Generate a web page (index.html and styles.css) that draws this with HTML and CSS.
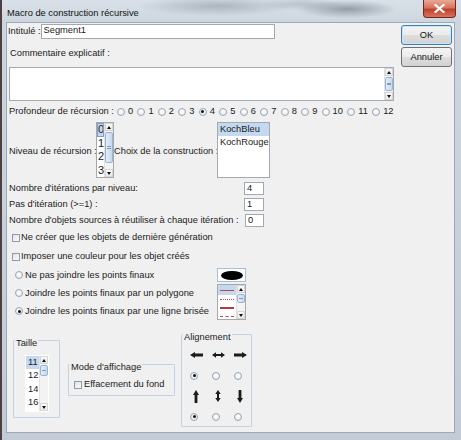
FILE: index.html
```html
<!DOCTYPE html>
<html lang="fr">
<head>
<meta charset="utf-8">
<title>Macro de construction récursive</title>
<link rel="stylesheet" href="styles.css">
</head>
<body>
<div class="frame">
  <div class="titlebar">
    <span class="title">Macro de construction récursive</span>
    <div class="close">
      <svg width="11" height="9" viewBox="0 0 11 9"><path d="M1.5 1 L9.5 8 M9.5 1 L1.5 8" stroke="#fff" stroke-width="2.2" stroke-linecap="square"/></svg>
    </div>
  </div>
  <div class="client">
    <div class="main">
      <div class="row r-intitule">
        <span>Intitulé :</span>
        <div class="field f-name">Segment1</div>
      </div>
      <div class="row r-comment">Commentaire explicatif :</div>
      <div class="textarea">
        <div class="ta-body"></div>
        <div class="vscroll">
          <div class="sb-btn up"></div>
          <div class="sb-track"><div class="sb-thumb t-ta"></div></div>
          <div class="sb-btn down"></div>
        </div>
      </div>
      <div class="row r-prof">
        <span class="lbl">Profondeur de récursion :</span>
        <span class="opt"><i class="radio"></i>0</span>
        <span class="opt"><i class="radio"></i>1</span>
        <span class="opt"><i class="radio"></i>2</span>
        <span class="opt"><i class="radio"></i>3</span>
        <span class="opt"><i class="radio on"></i>4</span>
        <span class="opt"><i class="radio"></i>5</span>
        <span class="opt"><i class="radio"></i>6</span>
        <span class="opt"><i class="radio"></i>7</span>
        <span class="opt"><i class="radio"></i>8</span>
        <span class="opt"><i class="radio"></i>9</span>
        <span class="opt"><i class="radio"></i>10</span>
        <span class="opt"><i class="radio"></i>11</span>
        <span class="opt"><i class="radio"></i>12</span>
      </div>
      <div class="row r-niveau">
        <span class="niv-lbl w-niv">Niveau de récursion :</span>
        <div class="list l-niveau">
          <div class="items">
            <div class="item sel focus">0</div>
            <div class="item">1</div>
            <div class="item">2</div>
            <div class="item">3</div>
          </div>
          <div class="vscroll">
            <div class="sb-btn up"></div>
            <div class="sb-track"><div class="sb-thumb t-niv"></div></div>
            <div class="sb-btn down"></div>
          </div>
        </div>
        <span class="niv-lbl w-choix">Choix de la construction :</span>
        <div class="list l-choix">
          <div class="items">
            <div class="item sel">KochBleu</div>
            <div class="item">KochRouge</div>
          </div>
        </div>
      </div>
      <div class="nums">
        <div class="num-row"><span>Nombre d'itérations par niveau:</span><div class="field f-num">4</div></div>
        <div class="num-row"><span>Pas d'itération (&gt;=1) :</span><div class="field f-num">1</div></div>
        <div class="num-row"><span>Nombre d'objets sources à réutiliser à chaque itération :</span><div class="field f-num f-last">0</div></div>
      </div>
      <div class="row r-check"><i class="check"></i>Ne créer que les objets de dernière génération</div>
      <div class="row r-check"><i class="check"></i>Imposer une couleur pour les objet créés</div>
      <div class="join">
        <div class="join-opts">
          <div class="row r-radio"><i class="radio"></i>Ne pas joindre les points finaux</div>
          <div class="row r-radio"><i class="radio"></i>Joindre les points finaux par un polygone</div>
          <div class="row r-radio"><i class="radio on"></i>Joindre les points finaux par une ligne brisée</div>
        </div>
        <div class="join-side">
          <div class="oval-box"><div class="oval"></div></div>
          <div class="list l-lines">
            <div class="items">
              <div class="line-item sel"><div class="ln solid"></div></div>
              <div class="line-item"><div class="ln dotted"></div></div>
              <div class="line-item"><div class="ln thick"></div></div>
              <div class="line-item"><div class="ln dashed"></div></div>
            </div>
            <div class="vscroll">
              <div class="sb-btn up"></div>
              <div class="sb-track"><div class="sb-thumb t-lines"></div></div>
              <div class="sb-btn down"></div>
            </div>
          </div>
        </div>
      </div>
      <div class="bottom">
        <div class="group g-taille">
          <span class="gtitle">Taille</span>
          <div class="list l-taille">
            <div class="items">
              <div class="item sel">11</div>
              <div class="item">12</div>
              <div class="item">14</div>
              <div class="item">16</div>
            </div>
            <div class="vscroll">
              <div class="sb-btn up"></div>
              <div class="sb-track"><div class="sb-thumb t-taille"></div></div>
              <div class="sb-btn down"></div>
            </div>
          </div>
        </div>
        <div class="group g-mode">
          <span class="gtitle">Mode d'affichage</span>
          <div class="row r-mode"><i class="check"></i>Effacement du fond</div>
        </div>
        <div class="group g-align">
          <span class="gtitle">Alignement</span>
          <div class="agrid">
            <div class="cell"><svg width="13" height="6" viewBox="0 0 13 6"><path d="M0 3 L5 0 L5 1.6 L13 1.6 L13 4.4 L5 4.4 L5 6 Z" fill="#1c1c1c"/></svg></div>
            <div class="cell"><svg width="13" height="6" viewBox="0 0 13 6"><path d="M0 3 L4 0.3 L4 2 L9 2 L9 0.3 L13 3 L9 5.7 L9 4 L4 4 L4 5.7 Z" fill="#1c1c1c"/></svg></div>
            <div class="cell"><svg width="13" height="6" viewBox="0 0 13 6"><path d="M13 3 L8 0 L8 1.6 L0 1.6 L0 4.4 L8 4.4 L8 6 Z" fill="#1c1c1c"/></svg></div>
            <div class="cell"><i class="radio on"></i></div>
            <div class="cell"><i class="radio"></i></div>
            <div class="cell"><i class="radio"></i></div>
            <div class="cell"><svg width="6" height="13" viewBox="0 0 6 13"><path d="M3 0 L6 5 L4.4 5 L4.4 13 L1.6 13 L1.6 5 L0 5 Z" fill="#1c1c1c"/></svg></div>
            <div class="cell"><svg width="6" height="12" viewBox="0 0 6 12"><path d="M3 0 L5.7 4 L4 4 L4 8 L5.7 8 L3 12 L0.3 8 L2 8 L2 4 L0.3 4 Z" fill="#1c1c1c"/></svg></div>
            <div class="cell"><svg width="6" height="13" viewBox="0 0 6 13"><path d="M3 13 L6 8 L4.4 8 L4.4 0 L1.6 0 L1.6 8 L0 8 Z" fill="#1c1c1c"/></svg></div>
            <div class="cell"><i class="radio on"></i></div>
            <div class="cell"><i class="radio"></i></div>
            <div class="cell"><i class="radio"></i></div>
          </div>
        </div>
      </div>
    </div>
    <div class="buttons">
      <div class="btn default">OK</div>
      <div class="btn">Annuler</div>
    </div>
  </div>
</div>
</body>
</html>
```
FILE: styles.css
```css
* { box-sizing: border-box; }
html, body { margin: 0; padding: 0; }
body {
  width: 461px;
  height: 440px;
  overflow: hidden;
  font-family: "Liberation Sans", Arial, sans-serif;
  font-size: 9.3px;
  line-height: 11px;
  color: #1b1b1b;
  background: #c8d1db;
}
.frame {
  width: 461px;
  height: 440px;
  display: flex;
  flex-direction: column;
  border-left: 2px solid #4d3f42;
  background:
    radial-gradient(ellipse 80px 10px at 215px 6px, rgba(95,105,115,0.35), transparent),
    radial-gradient(ellipse 50px 9px at 345px 9px, rgba(70,78,88,0.45), transparent),
    radial-gradient(ellipse 40px 7px at 300px 4px, rgba(120,128,138,0.3), transparent),
    linear-gradient(to bottom, #d9e0e8 0px, #cdd6df 22px, #c3ccd6 100%);
}
.titlebar {
  height: 22px;
  display: flex;
  align-items: flex-start;
  padding-left: 5px;
}
.title {
  margin-top: 8px;
  line-height: 11px;
  color: #111;
}
.close {
  margin-left: auto;
  margin-right: 5px;
  width: 33px;
  height: 18px;
  border: 1px solid #6f2a20;
  border-top: 0;
  border-radius: 0 0 4px 4px;
  background: linear-gradient(to bottom, #e9a897 0%, #d6755f 45%, #c2402a 55%, #d8735b 100%);
  display: flex;
  align-items: center;
  justify-content: center;
}
.client {
  margin-left: 4px;
  width: 449px;
  height: 411px;
  background: #f0f0f0;
  border: 1px solid #9aa8b7;
  display: flex;
  align-items: flex-start;
}
.main {
  width: 388px;
  display: flex;
  flex-direction: column;
}
.row {
  display: flex;
  align-items: center;
  white-space: nowrap;
}
.field {
  background: #fff;
  border: 1px solid #a3a9b1;
  padding-left: 2px;
  line-height: 11px;
}
.r-intitule { margin-top: 1px; height: 15px; padding-left: 1px; }
.f-name { width: 234px; height: 15px; margin-left: 0; }
.r-comment { height: 28px; padding-left: 3px; }
.textarea {
  margin-left: 2px;
  width: 385px;
  height: 34px;
  border: 1px solid #a3a9b1;
  background: #fff;
  display: flex;
}
.ta-body { flex: 1; }
.r-prof { height: 21px; padding-left: 2px; }
.lbl { margin-right: 3px; }
.opt { display: flex; align-items: center; margin-right: 4.3px; }
.opt .radio { margin-right: 3px; }
.radio {
  display: inline-block;
  flex: none;
  width: 8px;
  height: 8px;
  border-radius: 50%;
  border: 1px solid #98a6b6;
  background: radial-gradient(circle at 50% 40%, #ffffff, #e0e6ed);
  position: relative;
}
.radio.on::after {
  content: "";
  position: absolute;
  left: 1.5px;
  top: 1.5px;
  width: 3px;
  height: 3px;
  border-radius: 50%;
  background: #111;
}
.check {
  display: inline-block;
  flex: none;
  width: 8px;
  height: 8px;
  border: 1px solid #8e9bab;
  background: linear-gradient(135deg, #dde3ea, #fbfbfb);
  margin-right: 1px;
}
.r-niveau { height: 56px; padding-left: 2px; align-items: center; }
.niv-lbl { padding-top: 2px; overflow: visible; flex: none; }
.w-niv { width: 87px; }
.w-choix { width: 103px; }
.list {
  background: #fff;
  border: 1px solid #a3a9b1;
  display: flex;
}
.items { flex: 1; overflow: hidden; }
.item { white-space: nowrap; }
.item.sel { background: #c4d9ef; }
.l-niveau { width: 18px; height: 56px; flex: none; }
.l-niveau .item { height: 13.5px; line-height: 13.5px; font-size: 11px; padding-left: 1px; }
.l-niveau .item.focus { outline: 1px solid #7d9fc8; outline-offset: -1px; }
.l-choix { width: 53px; height: 56px; flex: none; }
.l-choix .item { height: 13px; line-height: 13px; padding-left: 2px; }
.nums { margin-top: 2px; padding-left: 2px; display: flex; flex-direction: column; }
.num-row {
  height: 16px;
  display: grid;
  grid-template-columns: 235px 20px;
  align-items: center;
  white-space: nowrap;
}
.f-num { height: 13px; width: 20px; }
.f-last { margin-left: 1px; width: 19px; }
.r-check { height: 19px; padding-left: 5px; }
.r-check .check { margin-right: 1px; }
.join { display: flex; }
.join-opts { width: 210px; display: flex; flex-direction: column; }
.r-radio { height: 18px; padding-left: 8px; }
.r-radio .radio { margin-right: 2px; }
.join-side { display: flex; flex-direction: column; }
.oval-box {
  margin-top: 2px;
  width: 29px;
  height: 14px;
  background: #fff;
  border: 1px solid #a8bdd6;
  display: flex;
  align-items: center;
  justify-content: center;
}
.oval { width: 22px; height: 9px; border-radius: 50%; background: #000; }
.l-lines { margin-top: 2px; width: 29px; height: 36px; }
.line-item { height: 8.5px; display: flex; align-items: center; padding: 0 2px; }
.line-item.sel { background: #c4d9ef; height: 10px; }
.ln { width: 16px; }
.ln.solid { border-top: 1px solid #b44a4a; }
.ln.dotted { border-top: 1px dotted #c05050; }
.ln.thick { border-top: 2px solid #b03a3a; }
.ln.dashed { border-top: 1px dashed #b44a4a; }
.vscroll {
  width: 9px;
  flex: none;
  display: flex;
  flex-direction: column;
  background: #f3f3f3;
  border-left: 1px solid #e2e2e2;
}
.sb-btn {
  height: 8px;
  flex: none;
  display: flex;
  align-items: center;
  justify-content: center;
  background: linear-gradient(to bottom, #fafafa, #e9e9e9);
  border: 1px solid #d6d6d6;
}
.sb-btn::before {
  content: "";
  border-left: 2.5px solid transparent;
  border-right: 2.5px solid transparent;
  border-bottom: 3px solid #111;
}
.sb-btn.down::before { border-bottom: 0; border-top: 3px solid #111; }
.sb-track { flex: 1; padding: 1px 0; display: flex; flex-direction: column; }
.sb-thumb {
  border: 1px solid #9db4cf;
  border-radius: 2px;
  background:
    linear-gradient(#7f9cc0, #7f9cc0) center 45% / 4px 1px no-repeat,
    linear-gradient(#7f9cc0, #7f9cc0) center 55% / 4px 1px no-repeat,
    linear-gradient(to right, #e3edf8, #c6d9ee);
}
.t-ta { flex: 1; }
.t-niv { height: 31px; }
.t-lines { height: 9px; }
.t-taille { height: 11px; }
.bottom { display: flex; align-items: flex-start; }
.group {
  position: relative;
  border: 1px solid #c3d2e2;
  border-radius: 1px;
}
.gtitle {
  position: absolute;
  top: -3px;
  left: 1px;
  padding: 0 1px;
  background: #f0f0f0;
  line-height: 10px;
  white-space: nowrap;
}
.g-taille { margin-left: 6px; margin-top: 20px; width: 47px; height: 78px; padding: 14px 0 0 11px; }
.l-taille { width: 24px; height: 57px; border-color: #fff; }
.l-taille .item { height: 13.4px; line-height: 13.4px; padding-left: 2px; }
.g-mode { margin-left: 8px; margin-top: 44px; width: 107px; height: 32px; padding: 14px 0 0 5px; }
.r-mode .check { margin-right: 2px; }
.g-align { margin-left: 6px; margin-top: 14px; width: 71px; height: 93px; padding: 10px 0 0 3px; }
.agrid {
  display: grid;
  grid-template-columns: repeat(3, 22px);
  grid-auto-rows: 20.5px;
}
.cell { display: flex; align-items: center; justify-content: center; }
.cell .radio { margin-right: 4px; }
.buttons {
  margin-left: 6px;
  margin-top: 2px;
  display: flex;
  flex-direction: column;
  gap: 2px;
}
.btn {
  width: 51px;
  height: 20px;
  border: 1px solid #707070;
  border-radius: 3px;
  background: linear-gradient(to bottom, #f4f4f4 0%, #ececec 48%, #dddddd 52%, #d2d2d2 100%);
  display: flex;
  align-items: center;
  justify-content: center;
  color: #111;
}
.btn.default {
  border-color: #3c7fb1;
  box-shadow: inset 0 0 0 1px #c9e6f8;
}
```
